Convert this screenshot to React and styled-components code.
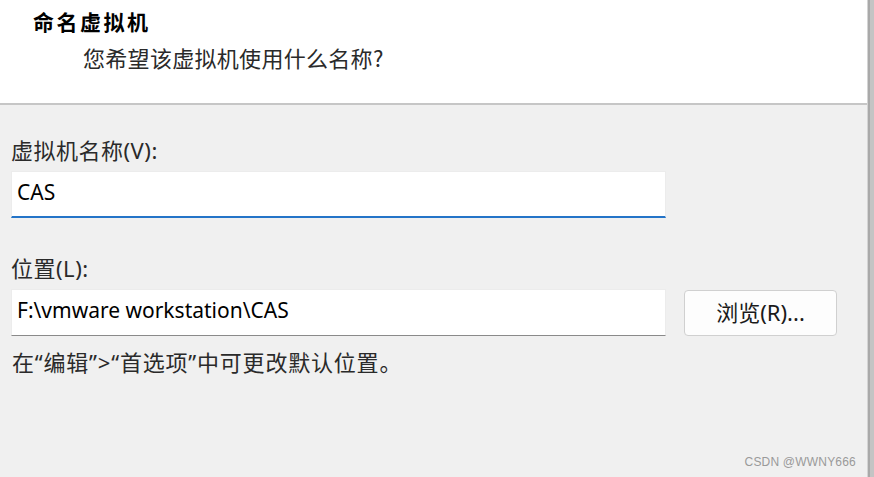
import styled, { createGlobalStyle } from 'styled-components'

const GlobalStyle = createGlobalStyle`
  html, body {
    margin: 0;
    padding: 0;
    background: #f0f0f0;
  }
  body {
    font-family: "Noto Sans", "Noto Sans CJK SC", sans-serif;
  }
`

const Window = styled.div`
  display: flex;
  width: 874px;
  height: 477px;
  overflow: hidden;
`

const Main = styled.div`
  flex: 1;
  display: flex;
  flex-direction: column;
  background: #f0f0f0;
  position: relative;
`

const Edge = styled.div`
  width: 6px;
  border-left: 1px solid #d4d4d4;
  box-shadow: inset 2px 0 0 #a9a9a9;
  background: #c4c4c4;
`

const Header = styled.header`
  height: 105px;
  box-sizing: border-box;
  background: #fff;
  padding: 7px 0 0 33px;
  border-bottom: 2px solid #c6c6c6;
`

const Title = styled.h1`
  margin: 0;
  font-family: "Noto Sans CJK SC", sans-serif;
  font-size: 21px;
  font-weight: 700;
  line-height: 28px;
  letter-spacing: 2.5px;
  color: #000;
`

const Subtitle = styled.p`
  margin: 8px 0 0 50px;
  font-family: "Noto Sans CJK SC", sans-serif;
  font-size: 22px;
  line-height: 28px;
  letter-spacing: 0.3px;
  color: #2a2a2a;
`

const Body = styled.div`
  display: flex;
  flex-direction: column;
  padding: 31px 0 0 11px;
`

const Label = styled.label`
  font-family: "Noto Sans", "Noto Sans CJK SC", sans-serif;
  font-size: 22px;
  line-height: 28px;
  letter-spacing: 0.5px;
  color: #2a2a2a;
  margin-top: ${p => p.$top || 0}px;
`

const Row = styled.div`
  display: flex;
  align-items: center;
  gap: 18px;
  margin-top: 7px;
`

const Field = styled.div`
  width: 655px;
  height: 47px;
  box-sizing: border-box;
  background: #fff;
  border: 1px solid #ececec;
  border-bottom: ${p => (p.$focused ? '2px solid #2474c8' : '1px solid #8a8a8a')};
  display: flex;
  align-items: center;
  padding: 0 0 ${p => (p.$focused ? 4 : 5)}px 5px;
  font-family: "Noto Sans", sans-serif;
  font-size: 21px;
  color: #000;
`

const Button = styled.button`
  width: 153px;
  height: 46px;
  box-sizing: border-box;
  background: #fdfdfd;
  border: 1px solid #d0d0d0;
  border-radius: 4px;
  font-family: "Noto Sans", "Noto Sans CJK SC", sans-serif;
  font-size: 22px;
  color: #1a1a1a;
  padding: 0 0 3px;
`

const Hint = styled.p`
  margin: 12px 0 0 1px;
  font-family: "Noto Sans", "Noto Sans CJK SC", sans-serif;
  font-size: 22px;
  line-height: 28px;
  letter-spacing: 0.8px;
  color: #2a2a2a;
`

const Watermark = styled.span`
  position: absolute;
  right: 11px;
  bottom: 8px;
  font-family: "Liberation Sans", Arial, sans-serif;
  font-size: 12px;
  color: #9a9a9a;
  letter-spacing: 0.2px;
`

export default function App() {
  return (
    <>
      <GlobalStyle />
      <Window>
        <Main>
          <Header>
            <Title>命名虚拟机</Title>
            <Subtitle>您希望该虚拟机使用什么名称?</Subtitle>
          </Header>
          <Body>
            <Label>虚拟机名称(V):</Label>
            <Row>
              <Field $focused>CAS</Field>
            </Row>
            <Label $top={36}>位置(L):</Label>
            <Row>
              <Field>F:\vmware workstation\CAS</Field>
              <Button>浏览(R)...</Button>
            </Row>
            <Hint>在“编辑”&gt;“首选项”中可更改默认位置。</Hint>
          </Body>
          <Watermark>CSDN @WWNY666</Watermark>
        </Main>
        <Edge />
      </Window>
    </>
  )
}
